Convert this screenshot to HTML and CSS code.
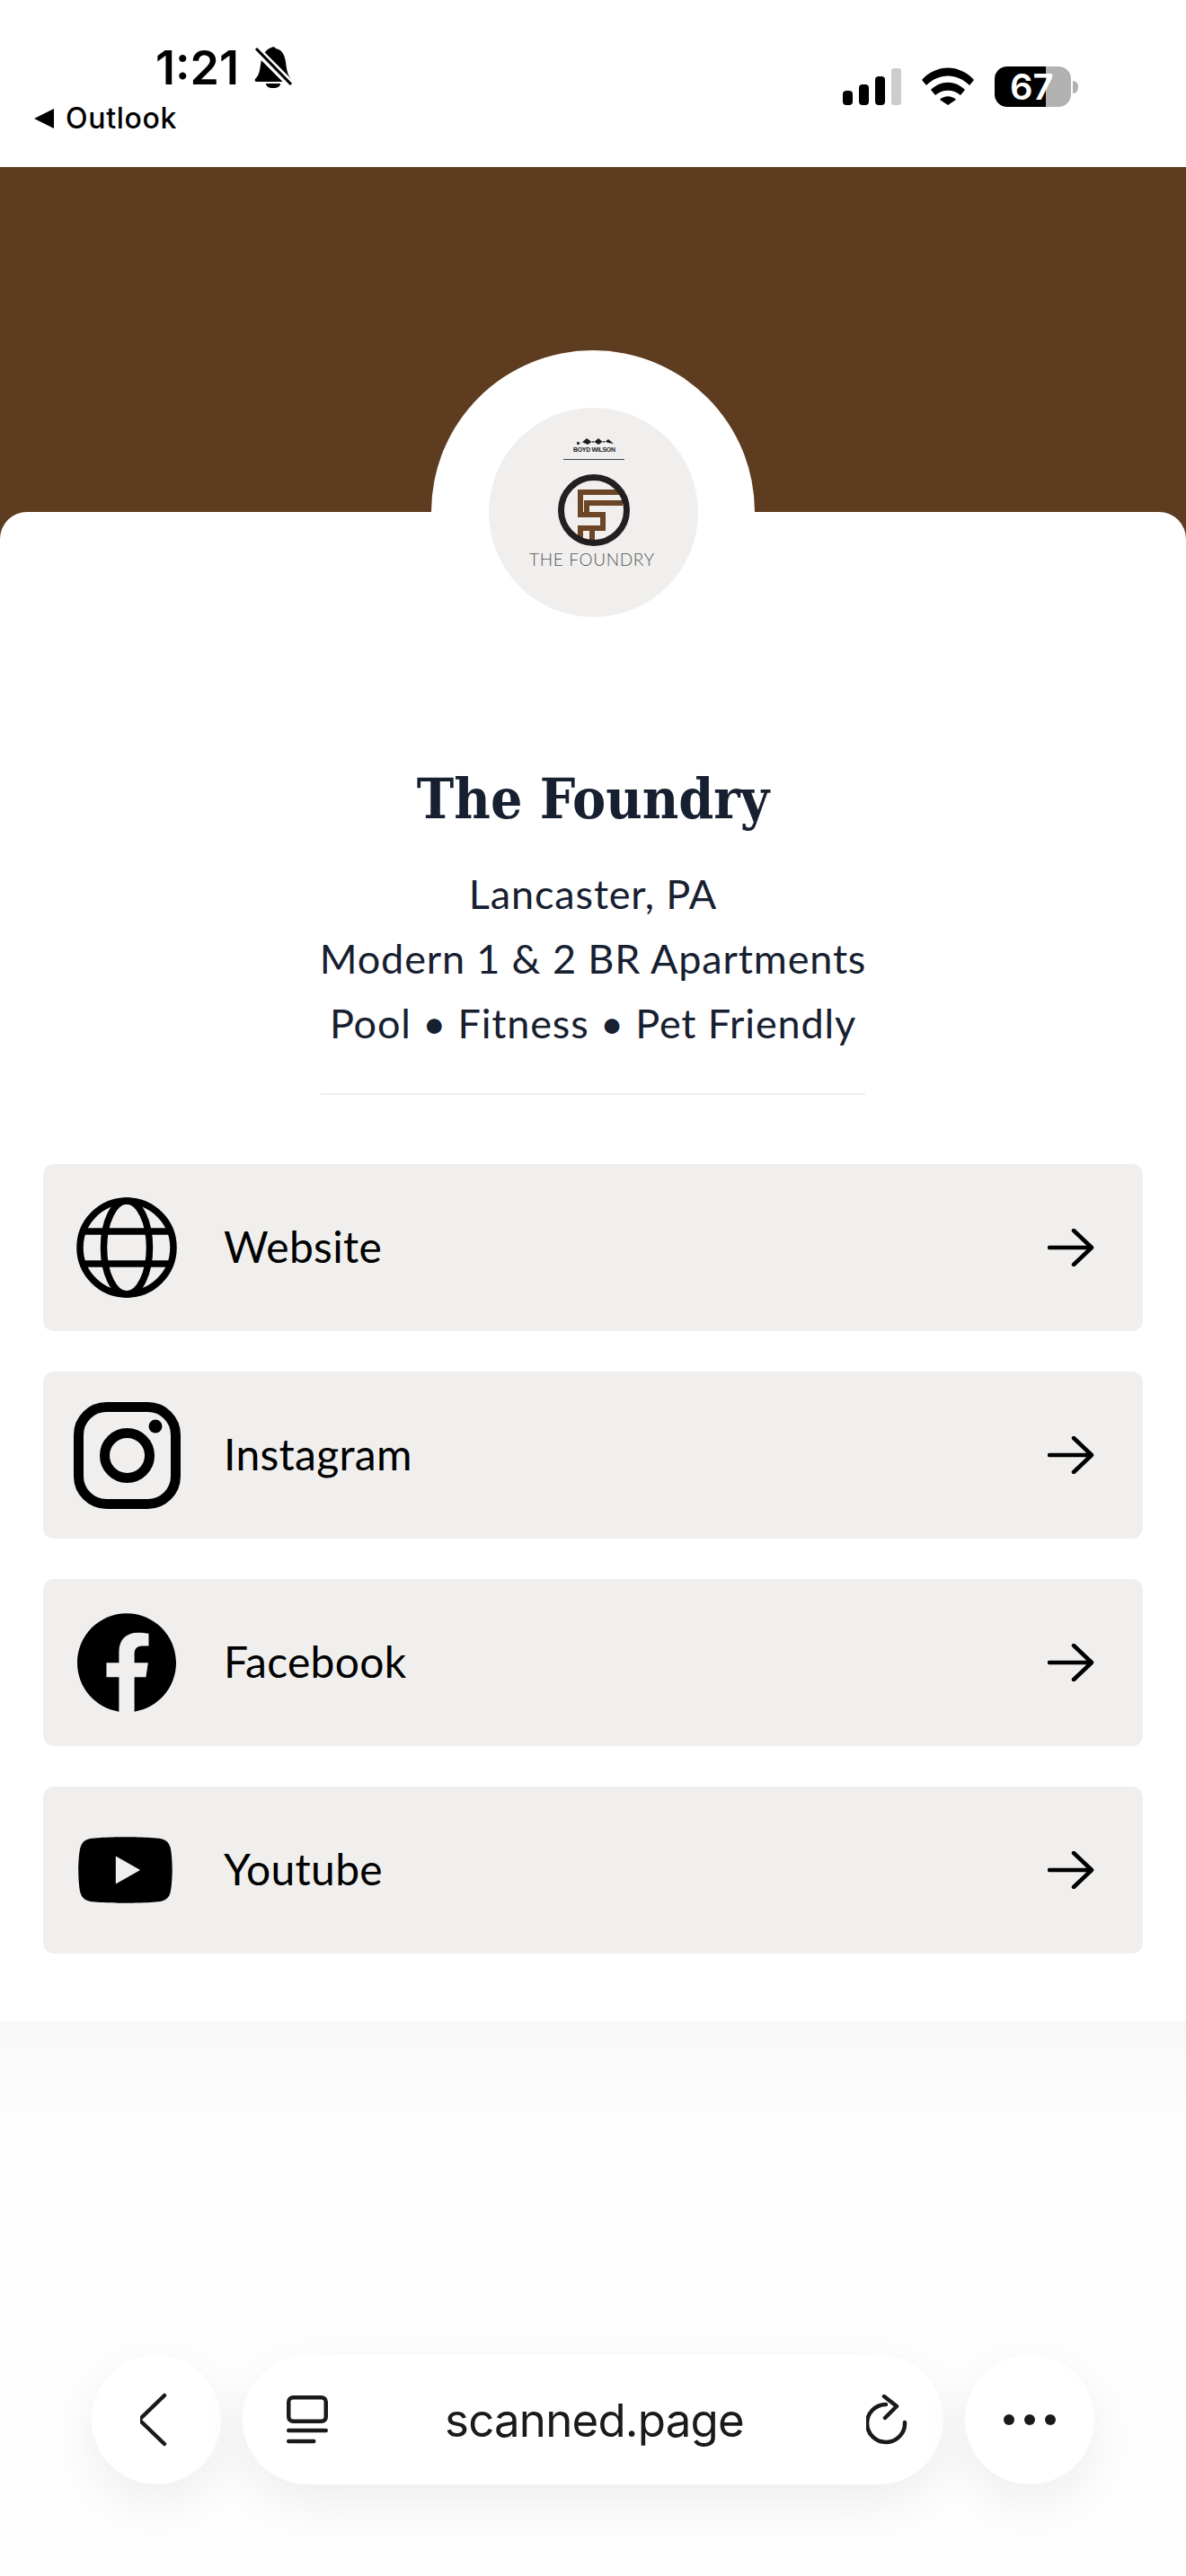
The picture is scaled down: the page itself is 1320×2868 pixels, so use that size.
FILE: index.html
```html
<!DOCTYPE html>
<html lang="en">
<head>
    <meta charset="UTF-8">
    <meta name="viewport" content="width=device-width, initial-scale=1.0">
    <title>The Foundry</title>
    <link rel="stylesheet" href="styles.css">
</head>
<body>
    <!-- Phone status bar -->
    <header class="status">
        <div class="status_left">
            <div class="clock_row">
                <span class="clock">1:21</span>
                <svg class="bell" viewBox="0 0 42 46" width="42" height="46">
                    <path d="M19 1c1-1 4-1 5 1 7 1 10 8 11 15 1 9 2 14 6 19 1 2 0 3-2 3H3c-2 0-3-1-2-3 4-4 5-8 6-16 1-9 5-17 12-19z" fill="#000"/>
                    <path d="M13 41h16c0 3-3 5-8 5s-8-2-8-5z" fill="#000"/>
                    <path d="M0 1l41 41" stroke="#fff" stroke-width="9"/>
                    <path d="M2 2l39 40" stroke="#000" stroke-width="3.2"/>
                </svg>
            </div>
            <div class="back_app">
                <span class="back_tri"></span>
                <span>Outlook</span>
            </div>
        </div>
        <div class="status_right">
            <svg viewBox="0 0 65 41" width="65" height="41">
                <rect x="0" y="25" width="11" height="16" rx="4" fill="#000"/>
                <rect x="18" y="18" width="11" height="23" rx="4" fill="#000"/>
                <rect x="36" y="9" width="11" height="32" rx="4" fill="#000"/>
                <rect x="54" y="0" width="11" height="41" rx="3" fill="#ccc"/>
            </svg>
            <svg class="wifi" viewBox="0 0 58 42" width="58" height="42">
                <path d="M0 14C16-4 42-4 58 14l-5 6C39 6 19 6 5 20z" fill="#000"/>
                <path d="M10 25c11-11 27-11 38 0l-5 6c-8-7-20-7-28 0z" fill="#000"/>
                <path d="M20 36c5-5 13-5 18 0l-9 6z" fill="#000"/>
            </svg>
            <div class="battery">
                <div class="battery_cell">67</div>
                <span class="battery_nub"></span>
            </div>
        </div>
    </header>

    <div class="banner"></div>

    <main class="card">
        <div class="avatar_ring">
            <div class="avatar">
                <svg viewBox="543 453 233 233" width="233" height="233">
                    <path d="M645 493l7-6 7 5 6-5 6 5 5-4 6 5-6-1-5-2-6 4-6-4-6 4-6-3z" fill="#1c1c1c"/>
                    <rect x="641" y="491" width="3" height="3" fill="#333"/>
                    <text x="660.5" y="502" class="logo_small" text-anchor="middle" textLength="47">BOYD WILSON</text>
                    <rect x="626" y="510" width="68" height="1" fill="#444"/>
                    <path d="M692 547h-47v25h25v15h-25v16M658 587v16M692 559h-40v13" fill="none" stroke="#6b4526" stroke-width="6"/>
                    <circle cx="660" cy="567" r="36.5" fill="none" stroke="#231f20" stroke-width="7"/>
                    <text x="588" y="629" class="logo_name" textLength="139">THE FOUNDRY</text>
                </svg>
            </div>
        </div>

        <h1>The Foundry</h1>
        <p class="tagline">Lancaster, PA<br>Modern 1 &amp; 2 BR Apartments<br>Pool • Fitness • Pet Friendly</p>
        <div class="divider"></div>

        <div class="links">
            <a class="link" href="#">
                <span class="link_icon">
                    <svg viewBox="0 0 112 112" width="112" height="112" fill="none" stroke="#000" stroke-width="7.5">
                        <circle cx="56" cy="56" r="52"/>
                        <ellipse cx="56" cy="56" rx="25.5" ry="52"/>
                        <path d="M10 38h92M10 74h92"/>
                    </svg>
                </span>
                <span class="link_text">Website</span>
                <svg class="arrow" viewBox="0 0 52 42" width="52" height="42" fill="none" stroke="#000" stroke-width="4.5" stroke-linecap="round" stroke-linejoin="round">
                    <path d="M2 21h47M29 2l20 19-20 19"/>
                </svg>
            </a>
            <a class="link" href="#">
                <span class="link_icon">
                    <svg viewBox="0 0 119 119" width="119" height="119" fill="none" stroke="#000" stroke-width="11">
                        <rect x="5.5" y="5.5" width="108" height="108" rx="31"/>
                        <circle cx="59.5" cy="59.5" r="25"/>
                        <circle cx="91" cy="27" r="7.5" fill="#000" stroke="none"/>
                    </svg>
                </span>
                <span class="link_text">Instagram</span>
                <svg class="arrow" viewBox="0 0 52 42" width="52" height="42" fill="none" stroke="#000" stroke-width="4.5" stroke-linecap="round" stroke-linejoin="round">
                    <path d="M2 21h47M29 2l20 19-20 19"/>
                </svg>
            </a>
            <a class="link" href="#">
                <span class="link_icon">
                    <svg viewBox="0 0 24 24" width="110" height="110">
                        <path d="M24 12.073c0-6.627-5.373-12-12-12s-12 5.373-12 12c0 5.99 4.388 10.954 10.125 11.854v-8.385H7.078v-3.47h3.047V9.43c0-3.007 1.792-4.669 4.533-4.669 1.312 0 2.686.235 2.686.235v2.953H15.83c-1.491 0-1.956.925-1.956 1.874v2.25h3.328l-.532 3.47h-2.796v8.385C19.612 23.027 24 18.062 24 12.073z" fill="#000"/>
                    </svg>
                </span>
                <span class="link_text">Facebook</span>
                <svg class="arrow" viewBox="0 0 52 42" width="52" height="42" fill="none" stroke="#000" stroke-width="4.5" stroke-linecap="round" stroke-linejoin="round">
                    <path d="M2 21h47M29 2l20 19-20 19"/>
                </svg>
            </a>
            <a class="link" href="#">
                <span class="link_icon">
                    <svg class="yt_icon" viewBox="0 3.5 24 17" width="105" height="74">
                        <path d="M23.498 6.186a3.016 3.016 0 0 0-2.122-2.136C19.505 3.545 12 3.545 12 3.545s-7.505 0-9.377.505A3.017 3.017 0 0 0 .502 6.186C0 8.07 0 12 0 12s0 3.93.502 5.814a3.016 3.016 0 0 0 2.122 2.136c1.871.505 9.376.505 9.376.505s7.505 0 9.377-.505a3.015 3.015 0 0 0 2.122-2.136C24 15.93 24 12 24 12s0-3.93-.502-5.814zM9.545 15.568V8.432L15.818 12l-6.273 3.568z" fill="#000"/>
                    </svg>
                </span>
                <span class="link_text">Youtube</span>
                <svg class="arrow" viewBox="0 0 52 42" width="52" height="42" fill="none" stroke="#000" stroke-width="4.5" stroke-linecap="round" stroke-linejoin="round">
                    <path d="M2 21h47M29 2l20 19-20 19"/>
                </svg>
            </a>
        </div>
    </main>

    <!-- Browser toolbar -->
    <footer class="browser">
        <div class="round_btn">
            <svg viewBox="6 0 36 60" width="36" height="60" fill="none" stroke="#1a1a1a" stroke-width="4.5" stroke-linecap="round" stroke-linejoin="round">
                <path d="M33 3L5 30l28 27"/>
            </svg>
        </div>
        <div class="url_bar">
            <svg viewBox="0 0 46 54" width="46" height="54" fill="none" stroke="#1a1a1a" stroke-width="4.5" stroke-linecap="round">
                <rect x="2.25" y="2.25" width="41.5" height="26.5" rx="5"/>
                <path d="M2.25 39h41.5M2.25 51h28"/>
            </svg>
            <span class="url">scanned.page</span>
            <svg viewBox="0 0 46 56" width="46" height="56" fill="none" stroke="#1a1a1a" stroke-width="4.5" stroke-linecap="round" stroke-linejoin="round">
                <path d="M43 31A21 21 0 1 1 22 11"/>
                <path d="M20 2l14 11-13 13"/>
            </svg>
        </div>
        <div class="round_btn">
            <svg viewBox="0 0 58 12" width="58" height="12" fill="#1a1a1a">
                <circle cx="6" cy="6" r="6"/>
                <circle cx="29" cy="6" r="6"/>
                <circle cx="52" cy="6" r="6"/>
            </svg>
        </div>
    </footer>
</body>
</html>
```

FILE: styles.css
```css
* {
    box-sizing: border-box;
}

body {
    margin: 0;
    height: 2868px;
    overflow: hidden;
    display: flex;
    flex-direction: column;
    background-color: #fff;
    font-family: Lato, "Noto Sans", sans-serif;
}

/* status bar */
.status {
    height: 186px;
    display: flex;
    justify-content: space-between;
    padding: 52px 120px 0 38px;
}

.clock_row {
    display: flex;
    align-items: center;
    gap: 17px;
    margin-left: 135px;
    height: 46px;
}

.clock {
    padding-top: 2px;
    font-family: Inter, sans-serif;
    font-size: 52px;
    font-weight: 600;
    line-height: 46px;
}

.back_app {
    display: flex;
    align-items: center;
    gap: 13px;
    margin-top: 16px;
    font-family: Inter, sans-serif;
    font-size: 32px;
    font-weight: 500;
    letter-spacing: 0.7px;
    line-height: 36px;
}

.back_tri {
    width: 0;
    height: 0;
    border-top: 11px solid transparent;
    border-bottom: 11px solid transparent;
    border-right: 22px solid #000;
}

.status_right {
    display: flex;
    align-items: flex-end;
    height: 65px;
    gap: 23px;
}

.battery {
    display: flex;
    align-items: center;
    gap: 2px;
    margin-bottom: -2px;
}

.battery_cell {
    width: 85px;
    height: 45px;
    padding-left: 17px;
    border-radius: 14px;
    background: linear-gradient(90deg, #000 57px, #b1b1b1 57px);
    font-family: Inter, sans-serif;
    font-size: 40px;
    font-weight: 600;
    line-height: 45px;
    color: #fff;
}

.battery_nub {
    width: 6px;
    height: 14px;
    border-radius: 0 6px 6px 0;
    background-color: #b1b1b1;
}

.banner {
    height: 414px;
    flex: none;
    background-color: #5e3c20;
}

/* card */
.card {
    position: relative;
    margin-top: -30px;
    height: 1680px;
    flex: none;
    padding-top: 280px;
    border-radius: 30px 30px 0 0;
    background-color: #fff;
    text-align: center;
}

.avatar_ring {
    position: absolute;
    left: 480px;
    top: -180px;
    width: 360px;
    height: 360px;
    border-radius: 50%;
    background-color: #fff;
    display: flex;
    align-items: center;
    justify-content: center;
}

.avatar {
    width: 233px;
    height: 233px;
    border-radius: 50%;
    background-color: #f0efed;
}

.avatar svg {
    display: block;
}

.logo_small {
    font-family: "Liberation Sans", sans-serif;
    font-size: 7px;
    font-weight: bold;
    fill: #222;
}

.logo_name {
    font-family: Lato, sans-serif;
    font-size: 19px;
    font-weight: 300;
    fill: #555;
}

h1 {
    margin: 0;
    font-family: "DejaVu Serif", serif;
    font-size: 62px;
    font-stretch: condensed;
    font-weight: bold;
    line-height: 80px;
    color: #172030;
}

.tagline {
    margin: 29px 0 0;
    font-size: 45px;
    letter-spacing: 0.85px;
    line-height: 72px;
    color: #172030;
}

.divider {
    width: 606px;
    height: 2px;
    margin: 42px auto 0;
    background-color: #f0f0f0;
}

.links {
    display: flex;
    flex-direction: column;
    gap: 45px;
    margin: 77px 48px 0;
}

.link {
    height: 186px;
    display: flex;
    align-items: center;
    padding: 0 54px 0 33px;
    border-radius: 12px;
    background-color: #f0efed;
    color: #000;
    text-decoration: none;
}

.link_icon {
    width: 120px;
    display: flex;
    align-items: center;
    justify-content: center;
}

.yt_icon {
    margin-right: 3px;
}

.link_text {
    flex: 1;
    margin-left: 48px;
    padding-bottom: 4px;
    font-size: 48px;
    letter-spacing: 0.3px;
    text-align: left;
}

/* browser toolbar */
.browser {
    flex: 1;
    display: flex;
    justify-content: center;
    gap: 24px;
    padding-top: 372px;
    background: linear-gradient(#f8f8f8, #fdfdfd 100px, #fefefe 220px);
}

.round_btn,
.url_bar {
    height: 144px;
    background-color: #fff;
    box-shadow: 0 20px 60px rgba(0, 0, 0, 0.07);
}

.round_btn {
    width: 144px;
    border-radius: 50%;
    display: flex;
    align-items: center;
    justify-content: center;
}

.url_bar {
    width: 780px;
    border-radius: 72px;
    display: flex;
    align-items: center;
    justify-content: space-between;
    padding: 0 40px 0 49px;
}

.url {
    margin-right: 6px;
    font-family: Inter, sans-serif;
    font-size: 51px;
    letter-spacing: -0.8px;
    color: #1a1a1a;
}
```
